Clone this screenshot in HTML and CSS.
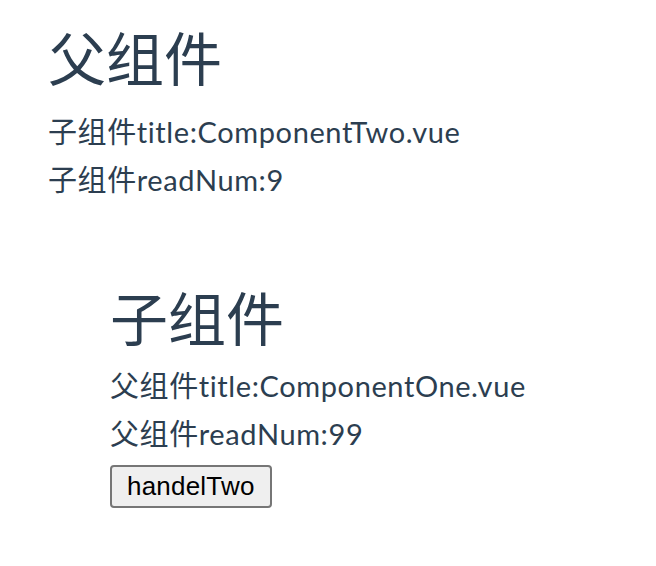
FILE: index.html
```html
<!DOCTYPE html>
<html lang="zh-CN">
<head>
<meta charset="utf-8">
<title>父组件</title>
<link rel="stylesheet" href="styles.css">
</head>
<body>
<div class="app">
  <div class="parent">
    <h1 class="heading">父组件</h1>
    <div class="line">子组件title:ComponentTwo.vue</div>
    <div class="line">子组件readNum:9</div>
    <div class="child">
      <h1 class="heading">子组件</h1>
      <div class="line">父组件title:ComponentOne.vue</div>
      <div class="line">父组件readNum:99</div>
      <button class="btn" type="button">handelTwo</button>
    </div>
  </div>
</div>
</body>
</html>
```
FILE: styles.css
```css
html, body {
  margin: 0;
  padding: 0;
  background: #ffffff;
}
.app {
  font-family: "Lato", "Noto Sans CJK SC", sans-serif;
  color: #2c3e50;
  padding: 24px 0 0 48px;
}
.heading {
  margin: 0;
  font-size: 58px;
  font-weight: 400;
  line-height: 70px;
  height: 70px;
}
.parent > .heading {
  margin-bottom: 14px;
}
.line {
  font-size: 29px;
  line-height: 48px;
  height: 48px;
  letter-spacing: 0.6px;
}
.child {
  margin: 80px 0 0 62px;
  display: flex;
  flex-direction: column;
  align-items: flex-start;
}
.child > .heading {
  margin-bottom: 8px;
}
.btn {
  margin-top: 7px;
  font-family: "Liberation Sans", Arial, sans-serif;
  font-size: 26px;
  letter-spacing: 0.2px;
  color: #000;
  background: #efefef;
  border: 2px solid #767676;
  border-radius: 4px;
  padding: 4px 15px 5px;
  line-height: 30px;
}
```
